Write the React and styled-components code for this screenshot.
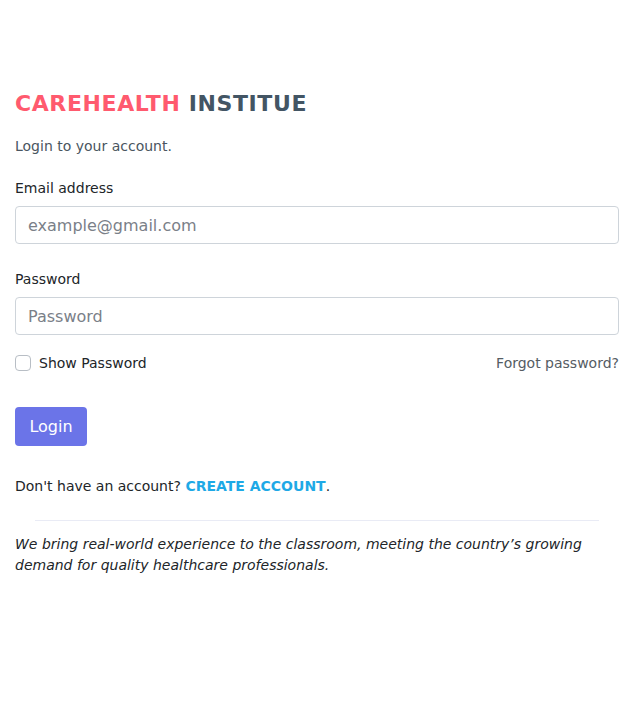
import React, { useState } from 'react';
import styled, { createGlobalStyle } from 'styled-components';

const GlobalStyle = createGlobalStyle`
  * { box-sizing: border-box; }
  body {
    margin: 0;
    background: #fff;
    font-family: "DejaVu Sans", "Noto Sans", sans-serif;
    color: #212529;
  }
`;

const Page = styled.main`
  padding: 88px 8px 0 15px;
`;

const Title = styled.h1`
  margin: 0;
  font-size: 22px;
  font-weight: 700;
  line-height: 32px;
  letter-spacing: 0.6px;
  span:first-child { color: #ff5a6e; }
  span:last-child { color: #435564; }
`;

const Subtitle = styled.p`
  margin: 16px 0 0;
  font-size: 14px;
  line-height: 21px;
  color: #4a5560;
`;

const Form = styled.form`
  margin-top: 20px;
`;

const Field = styled.div`
  margin-bottom: ${p => p.$mb || 0}px;
`;

const Label = styled.label`
  display: block;
  font-size: 14px;
  line-height: 21px;
  padding-top: 1px;
  margin-bottom: 7px;
  color: #212529;
`;

const Input = styled.input`
  display: block;
  width: 100%;
  height: 38px;
  padding: 6px 12px;
  font-family: inherit;
  font-size: 16px;
  color: #212529;
  border: 1px solid #ced4da;
  border-radius: 4px;
  outline: none;
  &::placeholder { color: #7a8088; }
`;

const OptionsRow = styled.div`
  display: flex;
  align-items: center;
  justify-content: space-between;
  margin-top: 17px;
  height: 21px;
`;

const CheckLabel = styled.label`
  display: flex;
  align-items: center;
  gap: 8px;
  font-size: 14px;
  color: #212529;
`;

const Check = styled.input`
  appearance: none;
  width: 16px;
  height: 16px;
  margin: 0;
  border: 1px solid #b8bec5;
  border-radius: 4px;
  background: #fff;
`;

const Forgot = styled.a`
  font-size: 14px;
  color: #555c63;
  text-decoration: none;
`;

const Button = styled.button`
  display: block;
  margin-top: 34px;
  width: 72px;
  height: 39px;
  padding: 0;
  background: #6b74e8;
  color: #fff;
  border: none;
  border-radius: 4px;
  font-family: inherit;
  font-size: 16px;
`;

const SignUp = styled.p`
  margin: 30px 0 0;
  font-size: 14px;
  line-height: 21px;
  color: #212529;
  a {
    color: #1ea9e6;
    font-weight: 700;
    text-decoration: none;
  }
`;

const Divider = styled.hr`
  margin: 23px 20px 0;
  border: none;
  border-top: 1px solid #e9ebf5;
`;

const Tagline = styled.p`
  margin: 13px 0 0;
  font-size: 14px;
  line-height: 21px;
  font-style: italic;
  color: #212529;
`;

export default function App() {
  const [show, setShow] = useState(false);
  return (
    <>
      <GlobalStyle />
      <Page>
        <Title>
          <span>CAREHEALTH</span> <span>INSTITUE</span>
        </Title>
        <Subtitle>Login to your account.</Subtitle>
        <Form onSubmit={e => e.preventDefault()}>
          <Field $mb={24}>
            <Label htmlFor="email">Email address</Label>
            <Input id="email" type="email" placeholder="example@gmail.com" />
          </Field>
          <Field>
            <Label htmlFor="password">Password</Label>
            <Input id="password" type={show ? 'text' : 'password'} placeholder="Password" />
          </Field>
          <OptionsRow>
            <CheckLabel>
              <Check type="checkbox" checked={show} onChange={() => setShow(!show)} />
              Show Password
            </CheckLabel>
            <Forgot href="#">Forgot password?</Forgot>
          </OptionsRow>
          <Button type="submit">Login</Button>
        </Form>
        <SignUp>
          Don't have an account? <a href="#">CREATE ACCOUNT</a>.
        </SignUp>
        <Divider />
        <Tagline>
          We bring real-world experience to the classroom, meeting the country’s growing demand for quality healthcare professionals.
        </Tagline>
      </Page>
    </>
  );
}
